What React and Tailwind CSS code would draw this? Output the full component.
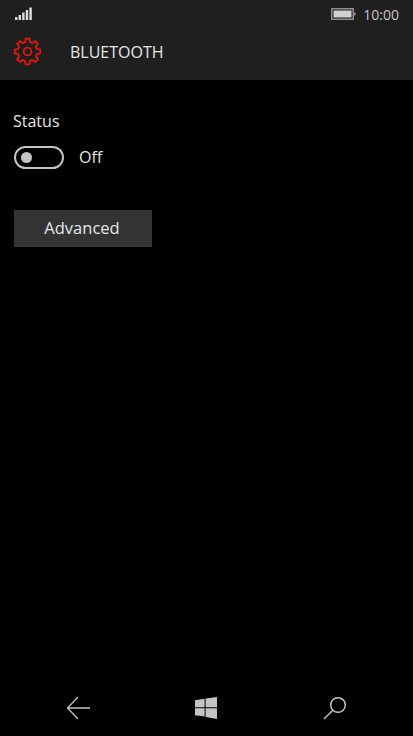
const uiFont = { fontFamily: '"Open Sans", "Noto Sans", sans-serif' };

// 8 toothed cog outline, tooth pointing straight up
function gearPath(cx, cy, outer, inner) {
  const pts = [];
  for (let i = 0; i < 8; i++) {
    const a = (i * Math.PI) / 4 - Math.PI / 2;
    const steps = [
      [inner, -0.27],
      [outer, -0.15],
      [outer, 0.15],
      [inner, 0.27],
    ];
    steps.forEach(([r, d]) => {
      pts.push(`${(cx + r * Math.cos(a + d)).toFixed(2)} ${(cy + r * Math.sin(a + d)).toFixed(2)}`);
    });
  }
  return `M${pts.join(' L')} Z`;
}

function GearIcon() {
  return (
    <svg width="29" height="29" viewBox="0 0 29 29" className="block">
      <path d={gearPath(14.5, 14.5, 13, 9.6)} fill="none" stroke="#ee1508" strokeWidth="1.7" strokeLinejoin="round" />
      <circle cx="14.5" cy="14.5" r="3.9" fill="none" stroke="#ee1508" strokeWidth="1.7" />
    </svg>
  );
}

function SignalBars() {
  return (
    <svg width="18" height="14" viewBox="0 0 18 14" className="block">
      <rect x="0" y="10" width="2.4" height="3" fill="#e0e0e0" />
      <rect x="3.6" y="8" width="2.4" height="5" fill="#e0e0e0" />
      <rect x="7.2" y="5.5" width="2.4" height="7.5" fill="#e0e0e0" />
      <rect x="10.8" y="3" width="2.4" height="10" fill="#e0e0e0" />
      <rect x="14.4" y="0.5" width="2.4" height="12.5" fill="#e0e0e0" />
    </svg>
  );
}

function Battery() {
  return (
    <svg width="25" height="12" viewBox="0 0 25 12" className="block">
      <rect x="0.75" y="0.75" width="21.5" height="10.5" fill="none" stroke="#8c8c8c" strokeWidth="1.5" />
      <rect x="2.5" y="2.5" width="18" height="7" fill="#cfcfcf" />
      <rect x="23" y="4.5" width="1.5" height="3" fill="#8c8c8c" />
    </svg>
  );
}

export default function App() {
  return (
    <div className="w-[413px] h-[736px] bg-black flex flex-col overflow-hidden" style={uiFont}>
      <div className="h-[80px] bg-[#1f1f1f] shrink-0">
        <div className="h-[28px] pl-[15px] pr-[14px] flex items-center justify-between">
          <SignalBars />
          <div className="flex items-center gap-[7px]">
            <Battery />
            <span className="text-[14px] text-[#c4c4c4]">10:00</span>
          </div>
        </div>
        <div className="flex items-center pl-[13px] h-[47px]">
          <GearIcon />
          <span className="ml-[28px] text-[16px] text-[#e6e6e6]">BLUETOOTH</span>
        </div>
      </div>

      <div className="flex-1 pl-[13px] pt-[30px]">
        <div className="text-[16px] leading-[22px] text-[#e6e6e6]">Status</div>
        <div className="flex items-center mt-[13px]">
          <div className="ml-px w-[50px] h-[23px] rounded-full border-2 border-[#c4c4c4] flex items-center pl-[5px]">
            <div className="w-[11px] h-[11px] rounded-full bg-[#c4c4c4]"></div>
          </div>
          <span className="ml-[15px] text-[16px] text-[#e6e6e6]">Off</span>
        </div>
        <button className="mt-[41px] ml-px w-[138px] h-[37px] bg-[#333333] text-[16.5px] text-[#e6e6e6] flex items-center justify-center pr-[2px]">
          Advanced
        </button>
      </div>

      <div className="h-[56px] shrink-0 flex items-center justify-between pl-[66px] pr-[66px]">
        <svg width="25" height="24" viewBox="0 0 25 24" className="block">
          <path d="M12 1 L1.5 12 L12 23 M1.5 12 H24" fill="none" stroke="#c4c4c4" strokeWidth="1.3" />
        </svg>
        <svg width="22" height="22" viewBox="0 0 22 22" className="block mr-[2px]">
          <path d="M0 3.2 L9.6 1.8 V10.2 H0 Z M10.6 1.6 L22 0 V10.2 H10.6 Z M0 11.2 H9.6 V19.6 L0 18.2 Z M10.6 11.2 H22 V22 L10.6 20 Z" fill="#c4c4c4" />
        </svg>
        <svg width="24" height="24" viewBox="0 0 24 24" className="block">
          <circle cx="15" cy="9" r="7.3" fill="none" stroke="#c4c4c4" strokeWidth="1.5" />
          <path d="M9.8 14.2 L1 23" fill="none" stroke="#c4c4c4" strokeWidth="1.5" />
        </svg>
      </div>
    </div>
  );
}
